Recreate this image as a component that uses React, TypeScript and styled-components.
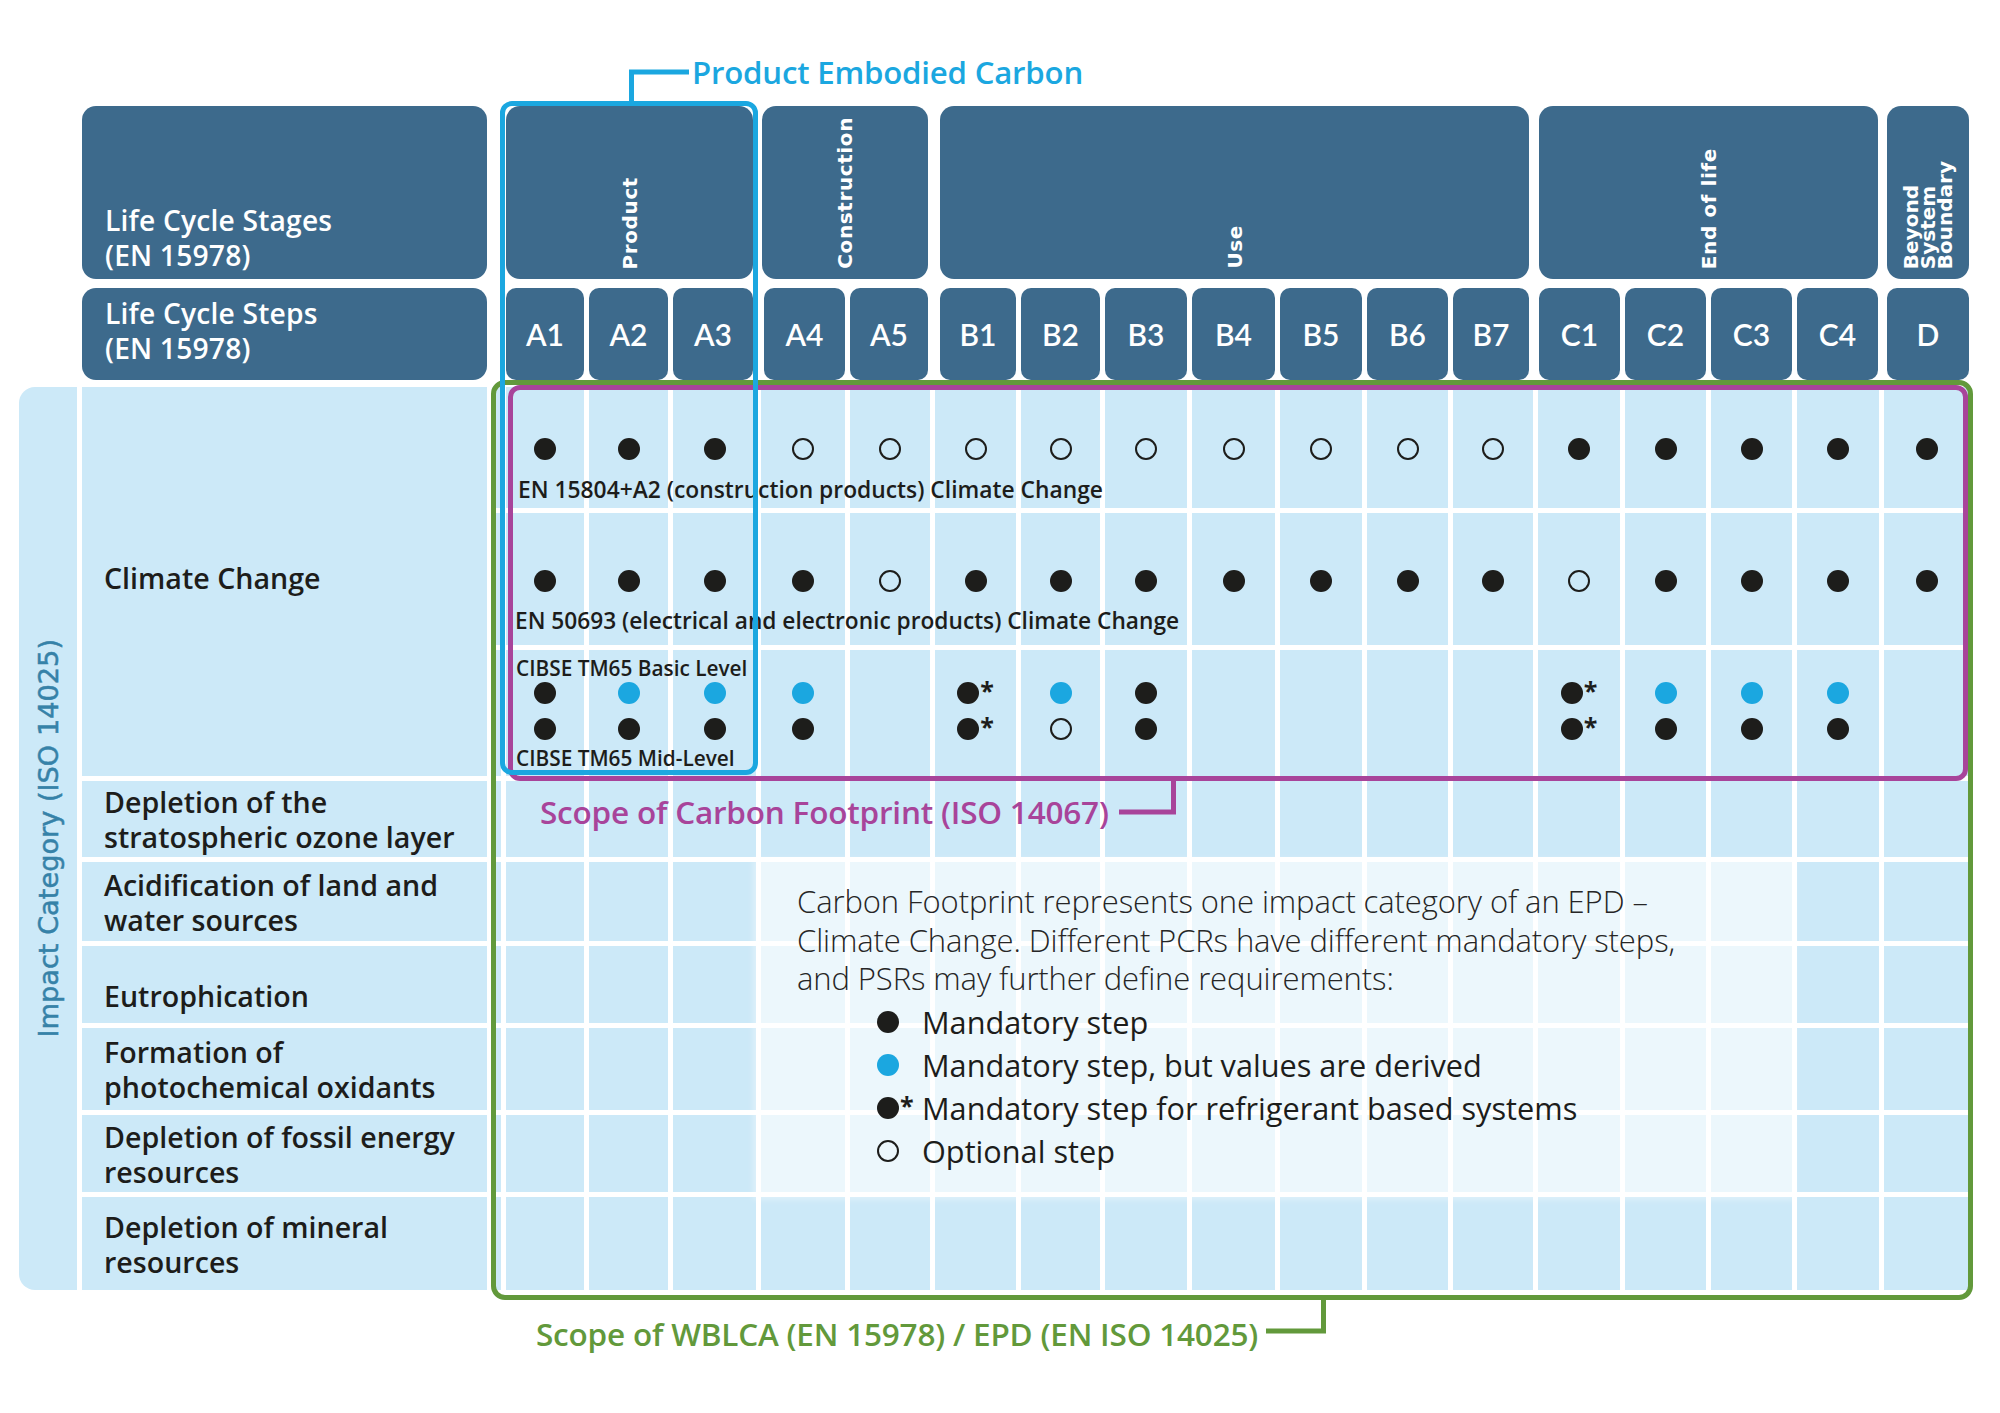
import React from 'react';
import styled, { createGlobalStyle, css } from 'styled-components';

const C = {
  header: '#3d6a8c',
  cell: '#cce9f8',
  ink: '#1d1d1b',
  blue: '#1ba7e0',
  purple: '#a8449a',
  green: '#62993b',
  impact: '#3682a8',
};

const COLS =
  '58px 405px 9px 78fr 79fr 83fr 84fr 80fr 81fr 79fr 82fr 83fr 82fr 81fr 80fr 82fr 81fr 81fr 82fr 85fr';

const SANS = '"Open Sans", Lato, sans-serif';

const Global = createGlobalStyle`
  html, body { margin: 0; padding: 0; background: #ffffff; }
  body { font-family: ${SANS}; color: ${C.ink}; }
  * { box-sizing: border-box; }
`;

const Chart = styled.div`
  position: relative;
  width: 2000px;
  height: 1413px;
  padding: 0 31px 0 19px;
  overflow: hidden;
`;

const TitleRow = styled.div`
  display: flex;
  align-items: flex-start;
  height: 106px;
  padding: 52px 0 0 610px;
`;

const Title = styled.div<{ $color: string; $size?: number }>`
  font-family: ${SANS};
  font-weight: 600;
  font-size: ${(p) => p.$size || 31.5}px;
  line-height: 40px;
  color: ${(p) => p.$color};
  white-space: nowrap;
  letter-spacing: -0.2px;
`;

const Bracket = styled.svg`
  flex: none;
  display: block;
  overflow: visible;
`;

const HeaderGrid = styled.div`
  display: grid;
  grid-template-columns: ${COLS};
  grid-template-rows: 173px 92px;
  column-gap: 5px;
  row-gap: 9px;
  margin-bottom: 7px;
`;

const HeadLabel = styled.div<{ $row: number; $align: 'end' | 'center' }>`
  grid-column: 2;
  grid-row: ${(p) => p.$row};
  background: ${C.header};
  border-radius: 14px;
  color: #ffffff;
  font-family: ${SANS};
  font-weight: 600;
  font-size: 28.2px;
  line-height: 35px;
  letter-spacing: 0.2px;
  padding: 0 0 ${(p) => (p.$align === 'end' ? '6px' : '6px')} 23px;
  display: flex;
  flex-direction: column;
  justify-content: ${(p) => (p.$align === 'end' ? 'flex-end' : 'center')};
`;

const StageBox = styled.div<{ $start: number; $span: number; $ml: number; $mr: number }>`
  grid-column: ${(p) => p.$start} / span ${(p) => p.$span};
  grid-row: 1;
  margin: 0 ${(p) => p.$mr}px 0 ${(p) => p.$ml}px;
  background: ${C.header};
  border-radius: 14px;
  display: flex;
  justify-content: center;
  align-items: flex-end;
  padding-bottom: 10px;
`;

const StageText = styled.span<{ $multi?: boolean }>`
  writing-mode: vertical-rl;
  transform: rotate(180deg);
  color: #ffffff;
  font-family: "DejaVu Sans", sans-serif;
  font-weight: 700;
  font-size: 20px;
  white-space: nowrap;
  ${(p) =>
    p.$multi
      ? css`
          line-height: 17px;
          letter-spacing: 0;
        `
      : css`
          line-height: 24px;
          letter-spacing: 0.6px;
        `}
`;

const StepBox = styled.div<{ $col: number; $ml: number; $mr: number }>`
  grid-column: ${(p) => p.$col};
  grid-row: 2;
  margin: 0 ${(p) => p.$mr}px 0 ${(p) => p.$ml}px;
  background: ${C.header};
  border-radius: 10px;
  display: flex;
  align-items: center;
  justify-content: center;
  color: #ffffff;
  font-family: Lato, sans-serif;
  font-weight: 600;
  font-size: 30px;
`;

const BodyGrid = styled.div`
  display: grid;
  grid-template-columns: ${COLS};
  grid-template-rows: 121px 132px 126px 76px 79px 77px 82px 77px 93px;
  gap: 5px;
`;

const ImpactCell = styled.div`
  grid-column: 1;
  grid-row: 1 / -1;
  background: ${C.cell};
  border-radius: 16px 0 0 16px;
  display: flex;
  align-items: center;
  justify-content: center;
`;

const ImpactText = styled.span`
  writing-mode: vertical-rl;
  transform: rotate(180deg);
  font-family: "DejaVu Sans", sans-serif;
  font-size: 27.2px;
  color: ${C.impact};
  -webkit-text-stroke: 0.5px ${C.impact};
  white-space: nowrap;
`;

const CategoryCell = styled.div<{ $row: string; $pt?: number; $pb?: number }>`
  grid-column: 2;
  grid-row: ${(p) => p.$row};
  background: ${C.cell};
  display: flex;
  align-items: center;
  padding: ${(p) => p.$pt || 0}px 0 ${(p) => p.$pb || 0}px 22px;
  font-family: ${SANS};
  font-weight: 600;
  font-size: 28.6px;
  line-height: 35px;
  color: ${C.ink};
`;

const SpacerCell = styled.div<{ $row: number }>`
  grid-column: 3;
  grid-row: ${(p) => p.$row};
  background: ${C.cell};
`;

const DataCell = styled.div<{ $row: number; $col: number; $top: number }>`
  grid-column: ${(p) => p.$col};
  grid-row: ${(p) => p.$row};
  background: ${C.cell};
  display: flex;
  flex-direction: column;
  align-items: center;
  gap: 14px;
  padding-top: ${(p) => p.$top}px;
`;

const Dot = styled.span<{ $kind: 'F' | 'B' | 'O' }>`
  display: block;
  flex: none;
  width: 22px;
  height: 22px;
  border-radius: 50%;
  ${(p) =>
    p.$kind === 'F'
      ? css`background: ${C.ink};`
      : p.$kind === 'B'
      ? css`background: ${C.blue};`
      : css`border: 2.5px solid ${C.ink};`}
`;

const StarGroup = styled.span`
  display: flex;
  align-items: flex-start;
  height: 22px;
`;

const Asterisk = styled.span`
  font-family: ${SANS};
  font-weight: 700;
  font-size: 25px;
  line-height: 1;
  margin: -4px 0 0 1px;
  color: ${C.ink};
`;

const Caption = styled.div<{ $row: number; $place: 'start' | 'end'; $m: number; $size: number; $pl: number }>`
  grid-column: 4 / -1;
  grid-row: ${(p) => p.$row};
  align-self: ${(p) => p.$place};
  margin: ${(p) => (p.$place === 'start' ? `${p.$m}px 0 0 0` : `0 0 ${p.$m}px 0`)};
  padding-left: ${(p) => p.$pl}px;
  font-family: ${SANS};
  font-weight: 600;
  font-size: ${(p) => p.$size}px;
  line-height: ${(p) => (p.$size > 21 ? 26 : 24)}px;
  color: ${C.ink};
  white-space: nowrap;
  z-index: 1;
  pointer-events: none;
`;

const ScopeRow = styled.div`
  grid-column: 4 / -1;
  grid-row: 4;
  display: flex;
  align-items: flex-start;
  padding-left: 34px;
  z-index: 1;
`;

const Legend = styled.div`
  grid-column: 7 / 19;
  grid-row: 5 / 9;
  margin: 0 0 -5px -5px;
  background: rgba(255, 255, 255, 0.62);
  box-shadow: 0 0 6px 3px rgba(255, 255, 255, 0.35);
  padding: 20px 0 0 41px;
  z-index: 1;
`;

const LegendPara = styled.p`
  margin: 0;
  font-family: ${SANS};
  font-weight: 300;
  font-size: 31px;
  line-height: 38.5px;
  color: #262626;
  letter-spacing: -0.1px;
`;

const LegendList = styled.div`
  margin-top: 3px;
  padding-left: 80px;
  display: flex;
  flex-direction: column;
`;

const LegendItem = styled.div`
  display: flex;
  align-items: center;
  height: 43px;
  font-family: ${SANS};
  font-weight: 400;
  font-size: 30.7px;
  color: ${C.ink};
  white-space: nowrap;
`;

const IconSlot = styled.span`
  width: 45px;
  flex: none;
  display: flex;
  align-items: center;
`;

const Footer = styled.div`
  display: flex;
  align-items: flex-start;
  padding-left: 517px;
`;

const Frame = styled.div<{ $color: string; $l: number; $t: number; $w: number; $h: number; $z: number; $r: number }>`
  position: absolute;
  left: ${(p) => p.$l}px;
  top: ${(p) => p.$t}px;
  width: ${(p) => p.$w}px;
  height: ${(p) => p.$h}px;
  border: 5px solid ${(p) => p.$color};
  border-radius: ${(p) => p.$r}px;
  z-index: ${(p) => p.$z};
  pointer-events: none;
`;

type K = 'F' | 'B' | 'O' | 'S' | '-';

const ROW1 = 'FFFOOOOOOOOOFFFFF';
const ROW2 = 'FFFFOFFFFFFFOFFFF';
const BASIC = 'FBBB-SBF----SBBB-';
const MID = 'FFFF-SOF----SFFF-';

const STEPS = ['A1', 'A2', 'A3', 'A4', 'A5', 'B1', 'B2', 'B3', 'B4', 'B5', 'B6', 'B7', 'C1', 'C2', 'C3', 'C4', 'D'];
const STEP_ML: Record<number, number> = { 3: 3, 5: 5, 12: 1, 16: 3 };
const STEP_MR: Record<number, number> = { 2: 3, 4: 2, 11: 4, 15: 1 };

const STAGES = [
  { label: 'Product', start: 0, span: 3, ml: 0, mr: 3 },
  { label: 'Construction', start: 3, span: 2, ml: 1, mr: 2 },
  { label: 'Use', start: 5, span: 7, ml: 5, mr: 4 },
  { label: 'End of life', start: 12, span: 4, ml: 1, mr: 1 },
];

const CATEGORIES: { label: React.ReactNode; row: string; pt?: number; pb?: number }[] = [
  { label: 'Climate Change', row: '1 / 4', pb: 8 },
  { label: <>Depletion of the<br />stratospheric ozone layer</>, row: '4' },
  { label: <>Acidification of land and<br />water sources</>, row: '5' },
  { label: 'Eutrophication', row: '6', pt: 22 },
  { label: <>Formation of<br />photochemical oxidants</>, row: '7' },
  { label: <>Depletion of fossil energy<br />resources</>, row: '8' },
  { label: <>Depletion of mineral<br />resources</>, row: '9' },
];

const Mark = ({ k }: { k: K }) => {
  if (k === '-') return null;
  if (k === 'S')
    return (
      <StarGroup>
        <Dot $kind="F" />
        <Asterisk>*</Asterisk>
      </StarGroup>
    );
  return <Dot $kind={k} />;
};

export default function App() {
  const rowTops = [51, 57, 32, 0, 0, 0, 0, 0, 0];

  const cells: React.ReactNode[] = [];
  for (let r = 0; r < 9; r++) {
    cells.push(<SpacerCell key={`sp${r}`} $row={r + 1} />);
    for (let c = 0; c < 17; c++) {
      let content: React.ReactNode = null;
      if (r === 0) content = <Mark k={ROW1[c] as K} />;
      if (r === 1) content = <Mark k={ROW2[c] as K} />;
      if (r === 2)
        content =
          BASIC[c] === '-' ? null : (
            <>
              <Mark k={BASIC[c] as K} />
              <Mark k={MID[c] as K} />
            </>
          );
      cells.push(
        <DataCell key={`c${r}-${c}`} $row={r + 1} $col={c + 4} $top={rowTops[r]}>
          {content}
        </DataCell>
      );
    }
  }

  return (
    <>
      <Global />
      <Chart>
        <TitleRow>
          <Bracket width="60" height="52" viewBox="0 0 60 52">
            <path d="M2.5 51 V20 H60" fill="none" stroke={C.blue} strokeWidth="5" />
          </Bracket>
          <Title $color={C.blue} $size={31.2} style={{ marginLeft: 3 }}>
            Product Embodied Carbon
          </Title>
        </TitleRow>

        <HeaderGrid>
          <HeadLabel $row={1} $align="end">
            <span>Life Cycle Stages</span>
            <span>(EN 15978)</span>
          </HeadLabel>
          {STAGES.map((s) => (
            <StageBox key={s.label} $start={s.start + 4} $span={s.span} $ml={s.ml} $mr={s.mr}>
              <StageText>{s.label}</StageText>
            </StageBox>
          ))}
          <StageBox $start={20} $span={1} $ml={3} $mr={0}>
            <StageText $multi>
              Beyond
              <br />
              System
              <br />
              Boundary
            </StageText>
          </StageBox>

          <HeadLabel $row={2} $align="center">
            <span>Life Cycle Steps</span>
            <span>(EN 15978)</span>
          </HeadLabel>
          {STEPS.map((s, i) => (
            <StepBox key={s} $col={i + 4} $ml={STEP_ML[i] || 0} $mr={STEP_MR[i] || 0}>
              {s}
            </StepBox>
          ))}
        </HeaderGrid>

        <BodyGrid>
          <ImpactCell>
            <ImpactText>Impact Category (ISO 14025)</ImpactText>
          </ImpactCell>
          {CATEGORIES.map((c, i) => (
            <CategoryCell key={i} $row={c.row} $pt={c.pt} $pb={c.pb}>
              <span>{c.label}</span>
            </CategoryCell>
          ))}
          {cells}

          <Caption $row={1} $place="end" $m={5} $size={22.8} $pl={12}>
            EN 15804+A2 (construction products) Climate Change
          </Caption>
          <Caption $row={2} $place="end" $m={11} $size={22.7} $pl={9}>
            EN 50693 (electrical and electronic products) Climate Change
          </Caption>
          <Caption $row={3} $place="start" $m={6} $size={20.8} $pl={10}>
            CIBSE TM65 Basic Level
          </Caption>
          <Caption $row={3} $place="end" $m={6} $size={20.8} $pl={10}>
            CIBSE TM65 Mid-Level
          </Caption>

          <ScopeRow>
            <Title $color={C.purple} style={{ marginTop: 11 }}>Scope of Carbon Footprint (ISO 14067)</Title>
            <Bracket width="57" height="41" viewBox="0 0 57 41" style={{ marginTop: -5, marginLeft: 10 }}>
              <path d="M0 36 H54.5 V0" fill="none" stroke={C.purple} strokeWidth="5" />
            </Bracket>
          </ScopeRow>

          <Legend>
            <LegendPara>
              Carbon Footprint represents one impact category of an EPD –<br />
              Climate Change. Different PCRs have different mandatory steps,<br />
              and PSRs may further define requirements:
            </LegendPara>
            <LegendList>
              <LegendItem>
                <IconSlot>
                  <Dot $kind="F" />
                </IconSlot>
                Mandatory step
              </LegendItem>
              <LegendItem>
                <IconSlot>
                  <Dot $kind="B" />
                </IconSlot>
                Mandatory step, but values are derived
              </LegendItem>
              <LegendItem>
                <IconSlot>
                  <StarGroup>
                    <Dot $kind="F" />
                    <Asterisk>*</Asterisk>
                  </StarGroup>
                </IconSlot>
                Mandatory step for refrigerant based systems
              </LegendItem>
              <LegendItem>
                <IconSlot>
                  <Dot $kind="O" />
                </IconSlot>
                Optional step
              </LegendItem>
            </LegendList>
          </Legend>
        </BodyGrid>

        <Footer>
          <Title $color={C.green} style={{ marginTop: 24 }}>
            Scope of WBLCA (EN 15978) / EPD (EN ISO 14025)
          </Title>
          <Bracket width="60" height="42" viewBox="0 0 60 42" style={{ marginTop: 6, marginLeft: 8 }}>
            <path d="M0 35 H57.5 V0" fill="none" stroke={C.green} strokeWidth="5" />
          </Bracket>
        </Footer>

        <Frame $color={C.green} $l={491} $t={380} $w={1482} $h={920} $z={2} $r={14} />
        <Frame $color={C.purple} $l={508} $t={385} $w={1460} $h={396} $z={3} $r={12} />
        <Frame $color={C.blue} $l={500} $t={101} $w={258} $h={674} $z={4} $r={12} />
      </Chart>
    </>
  );
}
